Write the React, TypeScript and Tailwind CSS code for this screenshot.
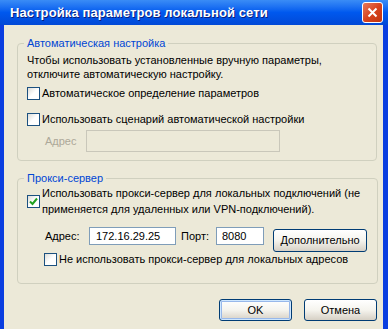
import {FC, ReactNode} from "react";

const font = {fontFamily: '"Liberation Sans", Arial, sans-serif'};

const CheckBox: FC<{checked?: boolean}> = ({checked}) => (
    <div className="w-[13px] h-[13px] shrink-0 border border-[#1c5180] bg-gradient-to-br from-[#dcdcd7] via-white to-white flex items-center justify-center">
        {checked && (
            <svg width="9" height="9" viewBox="0 0 9 9">
                <path d="M1 4.5 L3.5 7 L8 1.5" stroke="#21a121" strokeWidth="2" fill="none"/>
            </svg>
        )}
    </div>
)

const Group: FC<{title: string, className: string, children: ReactNode}> = ({title, className, children}) => (
    <fieldset className={"border border-[#d0d0bf] rounded-[4px] " + className}>
        <legend className="ml-[-3px] px-[3px] text-[#0046d5] leading-[14px]">{title}</legend>
        {children}
    </fieldset>
)

const XpButton: FC<{label: string, className?: string, primary?: boolean}> = ({label, className, primary}) => (
    <button className={"rounded-[3px] border border-[#003c74] bg-gradient-to-b from-white via-[#f5f4ee] to-[#d6d0c5] text-black text-[11px] " + (primary ? "shadow-[inset_0_0_0_1px_#cee7ff,inset_0_0_0_2px_#98b8ea] " : "") + (className ?? "")}>
        {label}
    </button>
)

const App: FC = () => {
    return (
        <div className="w-[388px] h-[329px] overflow-hidden flex flex-col bg-[#0a3ee0]" style={font}>
            <div className="h-[25px] shrink-0 flex items-center justify-between pl-[10px] pr-[5px] bg-gradient-to-b from-[#3a8cf6] via-[#0058ee] to-[#0249d6]">
                <span className="text-white font-bold text-[13px] tracking-[0.1px] [text-shadow:1px_1px_0_#0a1e7a]">
                    Настройка параметров локальной сети
                </span>
                <div className="w-[21px] h-[21px] rounded-[3px] border border-white bg-gradient-to-br from-[#e6785a] via-[#d8431d] to-[#c03510] flex items-center justify-center">
                    <svg width="11" height="11" viewBox="0 0 11 11">
                        <path d="M1.5 1.5 L9.5 9.5 M9.5 1.5 L1.5 9.5" stroke="white" strokeWidth="2"/>
                    </svg>
                </div>
            </div>
            <div className="flex-1 ml-[4px] mr-[5px] bg-[#ece9d8] text-[11px] text-black pt-[11px] pl-[13px] pr-[6px] whitespace-nowrap">
                <Group title="Автоматическая настройка" className="h-[125px] pl-[9px] pr-[10px]">
                    <p className="leading-[14px] mt-[3px]">
                        Чтобы использовать установленные вручную параметры,<br/>
                        отключите автоматическую настройку.
                    </p>
                    <div className="flex items-center gap-[2px] h-[13px] mt-[6px]">
                        <CheckBox/>
                        <span>Автоматическое определение параметров</span>
                    </div>
                    <div className="flex items-center gap-[2px] h-[13px] mt-[13px]">
                        <CheckBox/>
                        <span>Использовать сценарий автоматической настройки</span>
                    </div>
                    <div className="flex items-center mt-[4px] pl-[18px]">
                        <span className="text-[#aca899] w-[41px]">Адрес</span>
                        <div className="w-[194px] h-[22px] border border-[#c9c7ba] bg-[#ece9d8]"/>
                    </div>
                </Group>
                <Group title="Прокси-сервер" className="mt-[10px] h-[113px] pl-[9px] pr-[10px]">
                    <div className="flex items-center gap-[2px]">
                        <CheckBox checked/>
                        <span className="leading-[16px]">
                            Использовать прокси-сервер для локальных подключений (не<br/>
                            применяется для удаленных или VPN-подключений).
                        </span>
                    </div>
                    <div className="flex items-start mt-[10px] pl-[18px]">
                        <span className="w-[44px] leading-[18px]">Адрес:</span>
                        <div className="w-[87px] h-[18px] border border-[#7f9db9] bg-white flex items-center pl-[6px]">172.16.29.25</div>
                        <span className="ml-[5px] w-[35px] leading-[18px]">Порт:</span>
                        <div className="w-[48px] h-[18px] border border-[#7f9db9] bg-white flex items-center pl-[5px]">8080</div>
                        <XpButton label="Дополнительно" className="ml-[9px] w-[94px] h-[23px] mt-[2px]"/>
                    </div>
                    <div className="flex items-center gap-[2px] h-[13px] mt-[1px] pl-[17px]">
                        <CheckBox/>
                        <span>Не использовать прокси-сервер для локальных адресов</span>
                    </div>
                </Group>
                <div className="flex justify-end gap-[12px] mt-[15px]">
                    <XpButton label="OK" primary className="w-[73px] h-[22px]"/>
                    <XpButton label="Отмена" className="w-[73px] h-[22px]"/>
                </div>
            </div>
        </div>
    )
}
export default App
